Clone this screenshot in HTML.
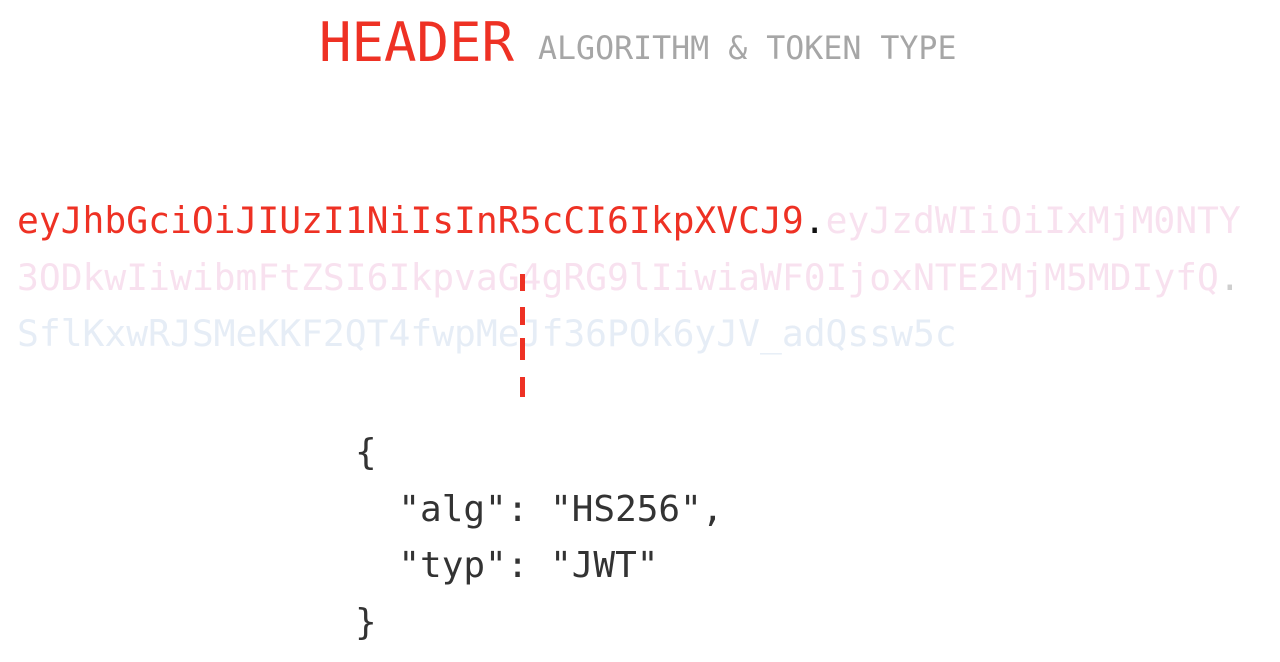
<!DOCTYPE html>
<html><head><meta charset="utf-8"><style>
html,body{margin:0;padding:0;background:#fff;width:1280px;height:662px;overflow:hidden;position:relative}
.m{font-family:"DejaVu Sans Mono","Liberation Mono",monospace;position:absolute;white-space:pre;margin:0}
#h{left:319px;top:8px;font-size:54px;color:#ee3124;line-height:70px}
#s{left:538px;top:29px;font-size:31.6px;color:#a6a6a6;line-height:40px}
#tok{left:17px;top:193px;font-size:36.3px;line-height:56.5px}
.r{color:#ee3124}.k{color:#111}.p{color:#f8e1ef}.b{color:#e6edf6}.g{color:#cfcfcf}
#js{left:355px;top:425px;font-size:36px;line-height:56.5px;color:#333}
.d{position:absolute;left:520px;width:5px;background:#ee3124}
</style></head><body>
<div class="m" id="h">HEADER</div>
<div class="m" id="s">ALGORITHM &amp; TOKEN TYPE</div>
<div class="m" id="tok"><span class="r">eyJhbGciOiJIUzI1NiIsInR5cCI6IkpXVCJ9</span><span class="k">.</span><span class="p">eyJzdWIiOiIxMjM0NTY</span>
<span class="p">3ODkwIiwibmFtZSI6IkpvaG4gRG9lIiwiaWF0IjoxNTE2MjM5MDIyfQ</span><span class="g">.</span>
<span class="b">SflKxwRJSMeKKF2QT4fwpMeJf36POk6yJV_adQssw5c</span></div>
<div class="d" style="top:274px;height:17px"></div>
<div class="d" style="top:307px;height:18px"></div>
<div class="d" style="top:338px;height:22px"></div>
<div class="d" style="top:377px;height:20px"></div>
<div class="m" id="js">{
  "alg": "HS256",
  "typ": "JWT"
}</div>
</body></html>
